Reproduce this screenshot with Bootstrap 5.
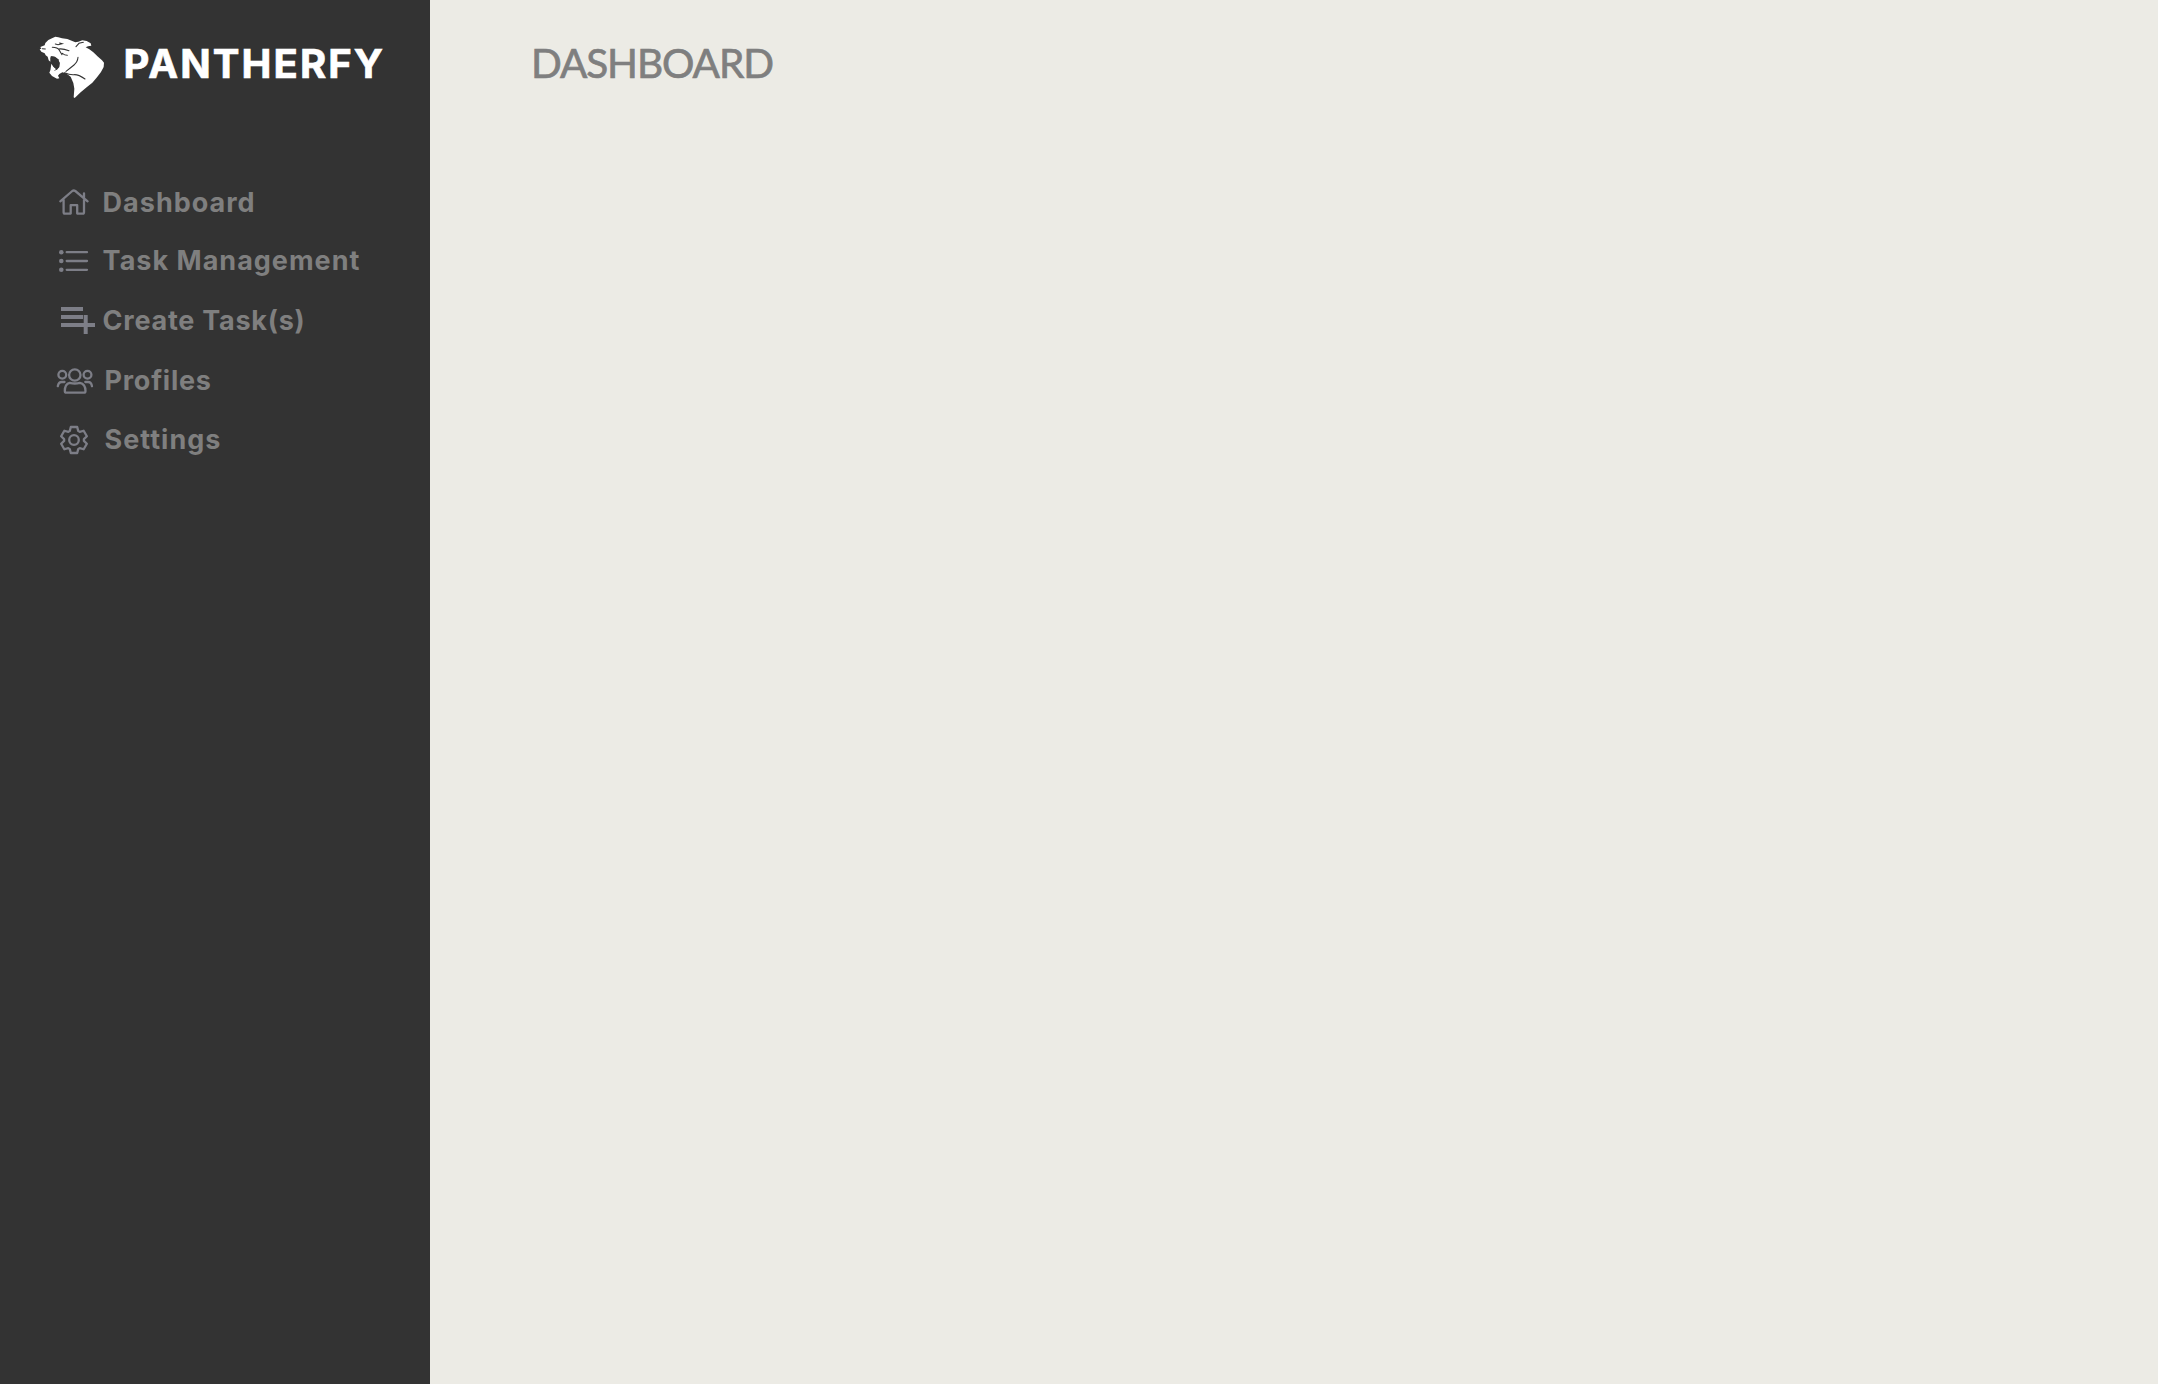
<!DOCTYPE html>
<html lang="en">
<head>
<meta charset="utf-8">
<title>Pantherfy</title>
<link href="https://cdn.jsdelivr.net/npm/bootstrap@5.3.0/dist/css/bootstrap.min.css" rel="stylesheet">
<style>
body{background:#ecebe5;font-family:Inter,"Liberation Sans",sans-serif;overflow:hidden}
.side{width:430px;background:#333}
.brand{height:175px;padding:30px 0 0 30px}
.brand svg{width:85px;height:75px}
.brand-name{font-size:40px;font-weight:700;line-height:48px;color:#fff;-webkit-text-stroke:.7px #fff;margin:10px 0 0 8.500px;letter-spacing:2.1px;white-space:nowrap}
.menu .nav-link{height:60px;padding:0 0 0 50px;color:#7f7f7f;font-size:27px;font-weight:700;line-height:34px;letter-spacing:1px;white-space:nowrap}
.menu .nav-link:first-child{height:58px}
.menu .nav-link:nth-child(3),.menu .nav-link:nth-child(4){letter-spacing:.75px}
.menu .nav-link:nth-child(4){height:59px}
.menu span{margin:11px 0 0 2.600px}
.menu .nudge{margin-left:4.500px}
.menu svg{width:50px;height:50px;fill:none;stroke:#7d7e87;stroke-width:2.3;stroke-linecap:round;stroke-linejoin:round}
.page-title{font-family:Lato,"Liberation Sans",sans-serif;font-size:40.5px;font-weight:400;line-height:48px;letter-spacing:-1.1px;color:#7f7f7f;-webkit-text-stroke:.7px #7f7f7f;margin:39px 0 0 101px}
</style>
<script src="https://cdn.jsdelivr.net/npm/bootstrap@5.3.0/dist/js/bootstrap.bundle.min.js"></script>
</head>
<body>
<div class="d-flex vh-100">
<aside class="side flex-shrink-0">
<a class="brand d-flex align-items-start text-decoration-none" href="#">
<svg viewBox="0 0 255 225"><path fill="#fff" d="M31 51L44 46 46 39 55 30 66 25 76 20 85 22 96 25 112 27 125 32 136 37 145 35 157 31 170 33 182 40 184 47 174 49 167 52 178 58 190 67 204 80 216 91 222 98 221 111 213 126 201 142 187 158 170 172 152 187 134 204 131 202 133 176 130 159 122 140 108 130 97 127 88 132 84 137 88 145 81 146 66 138 58 128 61 121 71 123 81 119 88 111 89 99 83 88 73 80 64 79 61 84 61 95 56 91 53 80 47 76 44 70 34 65 29 58 34 56Z"/><path fill="#fff" d="M64 101L70 110 78 117 71 124 61 122Z"/><path fill="#333" d="M62 79L75 80 85 88 89 99 87 111 79 117 72 111 66 101 63 95Z"/><g fill="none" stroke="#333" stroke-width="3.200" stroke-linecap="round"><path d="M76 42L84 44 96 41 89 39M67 52Q83 52 88 61T96 74M86 57Q98 55 117 62M97 70Q104 76 112 76M37 56L46 57M138 50L147 40 160 37M144 82Q143 96 132 105T108 124M104 128Q119 135 132 134T165 147"/></g></svg>
<span class="brand-name">PANTHERFY</span>
</a>
<nav class="menu nav flex-column">
<a class="nav-link d-flex" href="#"><svg viewBox="0 0 50 50"><path d="M10.300 26.300L22.300 16Q23.800 15 25.300 16L37.600 26.300M34 22.500V18.300M13.600 24.500V37.200Q13.600 38.600 15 38.600H20.700V30.200H27.200V38.600H32.700Q34 38.600 34 37.200V24.500"/></svg><span>Dashboard</span></a>
<a class="nav-link d-flex" href="#"><svg viewBox="0 0 50 50"><path d="M16.700 19.200H37M16.700 28H37M16.700 36.800H37"/><g fill="#7d7e87" stroke="none"><circle cx="11.300" cy="19.200" r="2.300"/><circle cx="11.300" cy="28" r="2.300"/><circle cx="11.300" cy="36.800" r="2.300"/></g></svg><span>Task Management</span></a>
<a class="nav-link d-flex" href="#"><svg viewBox="0 0 50 50"><path stroke-linecap="butt" stroke-width="4" d="M11 16H33M11 24H33M11 32H45M35.700 22V41"/></svg><span>Create Task(s)</span></a>
<a class="nav-link d-flex" href="#"><svg viewBox="0 0 50 50"><circle cx="24.800" cy="22" r="5.700"/><circle cx="12.300" cy="21.800" r="3.900"/><circle cx="37.500" cy="21.800" r="3.900"/><path d="M19.700 29.800Q24.800 31.200 29.900 29.800Q35.500 31 35.500 38Q35.500 39.700 33.800 39.700H16.500Q14.800 39.700 14.800 38Q14.800 31 19.700 29.800M7.800 33.200Q8.500 29 11.800 29H14.500M42 33.200Q41.300 29 38 29H35.300"/></svg><span class="nudge">Profiles</span></a>
<a class="nav-link d-flex" href="#"><svg viewBox="0 0 50 50"><g transform="translate(24 28)"><circle r="4.800"/><path d="M-3.200-13H3.200L4.200-9.100 5.700-8.100 9.660-9.270 12.860-3.730 9.900-.9V.9L12.860 3.730 9.660 9.270 5.700 8.100 4.200 9.100 3.200 13H-3.200L-4.200 9.100-5.700 8.100-9.660 9.270-12.860 3.730-9.900.9V-.9L-12.860-3.730-9.660-9.270-5.700-8.100-4.200-9.100Z"/></g></svg><span class="nudge">Settings</span></a>
</nav>
</aside>
<main class="flex-grow-1"><h1 class="page-title">DASHBOARD</h1></main>
</div>
</body>
</html>
